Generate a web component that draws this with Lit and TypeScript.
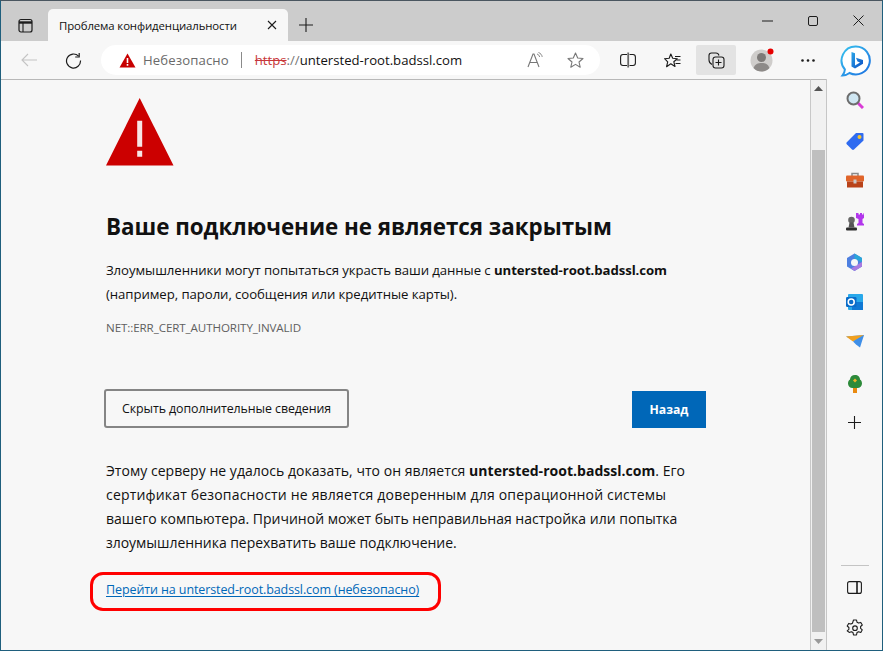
import { LitElement, html, css, svg } from "lit";
import { customElement } from "lit/decorators.js";

const ic = (w: number, h: number, body: unknown, vb?: string) => html`<svg width=${w} height=${h} viewBox=${vb ?? `0 0 ${w} ${h}`} fill="none">${body}</svg>`;
const S = "#1c1c1c";

@customElement("app-root")
export class AppRoot extends LitElement {
  static styles = css`
    :host { display: block; width: 883px; height: 651px; overflow: hidden; font-family: "Open Sans", "Noto Sans", sans-serif; color: #111; position: relative; box-sizing: border-box; border-left: 1px solid #1f5f7d; border-top: 1px solid #4a5660; border-right: 1px solid #1f5f7d; border-bottom: 1px solid #1f5f7d; background: #f7f7f7; }
    .win { display: grid; grid-template-rows: 40px 38px 1fr; height: 649px; }
    svg { display: block; flex: none; }
    .strip { background: #cccccc; display: flex; align-items: flex-end; padding-left: 47px; position: relative; }
    .tabbtn { position: absolute; left: 17px; top: 17px; }
    .tab { width: 240px; height: 32px; background: #f7f7f7; border-radius: 5px 5px 0 0; display: flex; align-items: center; padding: 0 11px; box-sizing: border-box; font-size: 11.4px; justify-content: space-between; letter-spacing: -0.12px; }
    .newtab { margin: 0 0 9px 11px; }
    .caption { margin-left: auto; display: flex; align-items: center; gap: 35px; padding: 0 18px 15px 0; align-self: flex-end; }
    .bar { background: #f7f7f7; display: flex; align-items: center; position: relative; box-sizing: border-box; }
    .nav { width: 100px; display: flex; padding-left: 19px; box-sizing: border-box; align-items: center; }
    .nav svg:last-child { margin-left: 27px; }
    .addr { width: 499px; height: 30px; background: #fff; border-radius: 15px; display: flex; align-items: center; padding-left: 18px; box-sizing: border-box; font-size: 13.15px; position: relative; }
    .unsafe { color: #6a6a6a; margin-left: 7px; letter-spacing: 0.12px; }
    .sep { width: 1px; height: 16px; background: #8a8a8a; margin: 0 13px 0 12px; }
    .https { color: #c8373a; text-decoration: line-through; }
    .slashes { color: #767676; }
    .addr .right { position: absolute; right: 16px; top: 7px; display: flex; gap: 24px; align-items: center; }
    .tools { display: flex; align-items: center; margin-left: 8px; }
    .tool { width: 40px; height: 30px; display: flex; align-items: center; justify-content: center; margin-right: 4px; }
    .tool.on { background: #e3e3e3; border-radius: 2px; }
    .tool.prof { width: 34px; margin-left: 5px; }
    .tool.more { width: 34px; margin-left: 8px; }
    .bing { position: absolute; left: 839px; top: 44px; }
    .main { display: flex; min-height: 0; }
    .content { width: 810px; box-sizing: border-box; padding: 18px 0 0 105px; border-top: 1px solid #b8b8b8; border-right: 1px solid #c8c8c8; background: #f7f7f7; }
    .h { font-size: 22.4px; font-weight: 700; margin: 46px 0 0; line-height: 30px; letter-spacing: -0.03px; color: #111; }
    .p { font-size: 13.2px; line-height: 24px; margin: 16px 0 0; width: 640px; letter-spacing: -0.07px; }
    .code { font-size: 11.6px; color: #5f5f5f; margin: 10px 0 0; line-height: 24px; letter-spacing: -0.09px; }
    .btns { display: flex; justify-content: space-between; width: 602px; margin-top: 49px; margin-left: -2px; align-items: flex-start; }
    .sec { width: 245px; height: 39px; box-sizing: border-box; border: 2px solid #858585; border-radius: 3px; background: #f7f7f7; font: inherit; font-size: 12.4px; color: #111; padding: 0; letter-spacing: -0.08px; }
    .pri { width: 74px; height: 37px; margin-top: 2px; border: 0; background: #0067b8; color: #fff; font: inherit; font-size: 12.2px; font-weight: 700; padding: 0; }
    .p2 { font-size: 14px; margin-top: 31px; width: 640px; letter-spacing: -0.04px; }
    .l1 { letter-spacing: 0.03px; }
    .l2 { letter-spacing: 0.18px; }
    .l3 { letter-spacing: 0px; }
    .link { display: block; font-size: 12.5px; color: #0067b8; text-decoration: underline; margin-top: 23px; line-height: 24px; letter-spacing: -0.1px; text-underline-offset: 2px; }
    .sb { width: 15px; background: #f1f1f1; position: relative; border-top: 1px solid #b8b8b8; box-sizing: border-box; }
    .thumb { position: absolute; left: 1px; width: 13px; top: 70px; height: 482px; background: #bfbfbf; }
    .ar { position: absolute; left: 3px; }
    .side { flex: 1; border-left: 1px solid #c6c6c6; background: #f7f7f7; position: relative; display: flex; flex-direction: column; align-items: center; padding-top: 12px; box-sizing: border-box; }
    .si { height: 40.6px; display: flex; align-items: flex-start; justify-content: center; }
    .bottom { position: absolute; bottom: 0; left: 0; right: 0; display: flex; flex-direction: column; align-items: center; }
    .rule { width: 28px; height: 1px; background: #c4c4c4; margin-bottom: 15px; }
    .gap-a { height: 25px; }
    .gap-b { height: 13px; }
    .ring { position: absolute; left: 89px; top: 571px; width: 351px; height: 39px; border: 3px solid #ff0000; border-radius: 13px; box-sizing: border-box; pointer-events: none; }
  `;

  render() {
    return html`<div class="win">
      <div class="strip">
        <div class="tabbtn">${ic(16, 16, svg`<rect x="1" y="1.5" width="13" height="12.5" rx="2" stroke=${S} stroke-width="1.2"/><path d="M1 4.5h13" stroke=${S} stroke-width="2.4"/><path d="M5 4.5V14" stroke=${S} stroke-width="1.1"/>`)}</div>
        <div class="tab"><span>Проблема конфиденциальности</span>${ic(10, 10, svg`<path d="M1 1l8 8M9 1l-8 8" stroke=${S} stroke-width="1.1"/>`)}</div>
        <div class="newtab">${ic(14, 14, svg`<path d="M7 0v14M0 7h14" stroke=${S} stroke-width="1.1"/>`)}</div>
        <div class="caption">
          ${ic(11, 2, svg`<path d="M0 1h11" stroke=${S} stroke-width="1"/>`)}
          ${ic(10, 10, svg`<rect x=".5" y=".5" width="9" height="9" rx="1.5" stroke=${S}/>`)}
          ${ic(11, 11, svg`<path d="M.5.5l10 10M10.5.5l-10 10" stroke=${S}/>`)}
        </div>
      </div>
      <div class="bar">
        <div class="nav">
          ${ic(18, 14, svg`<path d="M17 7H2M8 1L2 7l6 6" stroke="#c4c4c4" stroke-width="1.1"/>`)}
          ${ic(17, 17, svg`<path d="M13.6 4.2A7 7 0 1 0 15.5 8.5" stroke=${S} stroke-width="1.2"/><path d="M14.2 1v4h-4" stroke=${S} stroke-width="1.2"/>`)}
        </div>
        <div class="addr">
          ${ic(17, 15, svg`<path d="M8.5 0.5L16.5 14.5H.5z" fill="#c80000"/><path d="M8.5 5v5M8.5 11v1.8" stroke="#fff" stroke-width="1.6"/>`)}
          <span class="unsafe">Небезопасно</span><span class="sep"></span>
          <span class="https">https</span><span class="slashes">://</span><span>untersted-root.badssl.com</span>
          <div class="right">
            ${ic(16, 16, svg`<path d="M1 15L6 2h1l5 13M3 10.5h7.5" stroke="#777" stroke-width="1.1"/><path d="M10 2c1.6.6 2.4 1.6 2.6 3M11.5.5c2 .8 3.4 2.3 3.7 4.4" stroke="#777" stroke-width=".9"/>`)}
            ${ic(17, 16, svg`<path d="M8.5 1l2.2 5 5.3.5-4 3.5 1.2 5.2-4.7-2.8-4.7 2.8L5 10 1 6.5 6.3 6z" stroke="#777" stroke-width="1.1" stroke-linejoin="round"/>`)}
          </div>
        </div>
        <div class="tools">
          <div class="tool">${ic(16, 16, svg`<path d="M7 2.500H3A2.500 2.500 0 0 0 .6 5v6A2.500 2.500 0 0 0 3 13.500h4M9.500 2.500H13A2.500 2.500 0 0 1 15.400 5v6A2.500 2.500 0 0 1 13 13.500H9.500" stroke=${S} stroke-width="1.100"/><path d="M8.200 .5v15" stroke="#666" stroke-width="1.800"/>`)}</div>
          <div class="tool">${ic(17, 16, svg`<path d="M6.800 .8l1.900 4.300 4.600.4-3.500 3 1.200 4.800-4.200-2.700-4.200 2.900 1.100-4.900L.6 5.500l4.600-.4z" stroke=${S} stroke-width="1.150" stroke-linejoin="round" transform="translate(0 1.200)"/><path d="M11 4.500h5.500M12.500 8h4M11.500 11.500h5" stroke=${S} stroke-width="1.100"/>`)}</div>
          <div class="tool on">${ic(17, 17, svg`<path d="M4 12.500C2 11.500 1 10 1 8V3.500C1 2 2 1 3.500 1H8c1.500 0 2.500.5 3 2.500" stroke=${S} stroke-width="1.100"/><rect x="5" y="5" width="11" height="11" rx="2.500" stroke=${S} stroke-width="1.100"/><path d="M10.500 7.500v6M7.500 10.500h6" stroke=${S} stroke-width="1.100"/>`)}</div>
          <div class="tool prof">${ic(24, 24, svg`<circle cx="11.500" cy="12.500" r="11" fill="#cfcdcb"/><circle cx="11.500" cy="9.500" r="4.500" fill="#7d7a78"/><path d="M3.500 20c1.500-4 4.500-5 8-5s6.500 1 8 5c-2 2.500-5 3.500-8 3.500s-6-1-8-3.500z" fill="#8d8a88"/><circle cx="20.500" cy="3.500" r="3" fill="#e60000"/>`)}</div>
          <div class="tool more">${ic(14, 3, svg`<circle cx="1.500" cy="1.500" r="1.300" fill=${S}/><circle cx="7" cy="1.500" r="1.300" fill=${S}/><circle cx="12.500" cy="1.500" r="1.300" fill=${S}/>`)}</div>
        </div>
      </div>
      <div class="main">
        <div class="content">
          ${ic(68, 68, svg`<path d="M33.700 0L67.500 67.500H0z" fill="#cc0000"/><path d="M33.700 22.700v26M33.700 52.700v6" stroke="#f7e5e5" stroke-width="5"/>`)}
          <h1 class="h">Ваше подключение не является закрытым</h1>
          <p class="p">Злоумышленники могут попытаться украсть ваши данные с <b>untersted-root.badssl.com</b><br>(например, пароли, сообщения или кредитные карты).</p>
          <div class="code">NET::ERR_CERT_AUTHORITY_INVALID</div>
          <div class="btns"><button class="sec">Скрыть дополнительные сведения</button><button class="pri">Назад</button></div>
          <p class="p p2"><span class="l1">Этому серверу не удалось доказать, что он является <b>untersted-root.badssl.com</b>. Его</span><br><span class="l2">сертификат безопасности не является доверенным для операционной системы</span><br><span class="l3">вашего компьютера. Причиной может быть неправильная настройка или попытка</span><br>злоумышленника перехватить ваше подключение.</p>
          <a class="link">Перейти на untersted-root.badssl.com (небезопасно)</a>
        </div>
        <div class="sb">
          <div class="ar" style="top:6px">${ic(9, 5, svg`<path d="M4.500 0L9 5H0z" fill="#555"/>`)}</div>
          <div class="thumb"></div>
          <div class="ar" style="bottom:6px">${ic(9, 5, svg`<path d="M0 0h9L4.500 5z" fill="#999"/>`)}</div>
        </div>
        <div class="side">
          <div class="si">${ic(18, 18, svg`<path d="M11 11l6 6" stroke="#d93bd6" stroke-width="3"/><circle cx="7.500" cy="7.500" r="6" fill="#cfe6f2" stroke="#6d6d6d" stroke-width="2"/>`)}</div>
          <div class="si">${ic(18, 18, svg`<path d="M10 1h6.500a1 1 0 0 1 1 1v6.500L8 17.500a1.500 1.500 0 0 1-2 0L.8 12.300a1.500 1.500 0 0 1 0-2z" fill="#2f6bf0"/><circle cx="13.500" cy="5" r="2" fill="#f4c430"/>`)}</div>
          <div class="si">${ic(18, 16, svg`<path d="M6 4V1.500h6V4" stroke="#8a8a8a" stroke-width="1.500"/><rect y="3.500" width="18" height="6" rx="1" fill="#e0642a"/><rect x="1" y="9.500" width="16" height="6" fill="#b9431a"/><rect x="7.500" y="7.500" width="3" height="4" fill="#c9c9c9"/>`)}</div>
          <div class="si">${ic(18, 18, svg`<path d="M10.500 1h2v1.500h1.500V1h2v1.500h1.500V1h.500v5l-1.500 1v4l1.500 1v1.500h-7V12l1.500-1V7L10 6V1z" fill="#b236ec" transform="translate(0 -1)"/><circle cx="5.500" cy="7" r="3.300" fill="#666"/><path d="M3.500 9.500h4l1 5h-6z" fill="#555"/><rect y="14.500" width="11" height="3" rx="1" fill="#2d2d2d"/>`)}</div>
          <div class="si">${ic(17, 18, svg`<path d="M8.500 0.500L16 5v8.500L8.500 18 1 13.500V5z" fill="#4d7fe0"/><path d="M8.500 0.500L16 5v4l-7.500-3z" fill="#2aa5d8"/><path d="M16 9v4.500L8.500 18 5 15.500z" fill="#a97ae0"/><circle cx="8.500" cy="9.500" r="3.500" fill="#f7f7f7"/>`)}</div>
          <div class="si">${ic(17, 16, svg`<rect x="2" y="0" width="15" height="16" rx="1" fill="#28a8ea"/><path d="M6 8h11v8H6z" fill="#0f78d4"/><rect x="0" y="3" width="10.500" height="10" rx="1.200" fill="#0a6cc9"/><circle cx="5.200" cy="8" r="3" stroke="#fff" stroke-width="1.500"/>`)}</div>
          <div class="si">${ic(18, 13, svg`<path d="M0 1.500L18 0l-5 8z" fill="#4aa0f0"/><path d="M0 1.500l7 5 11-6.500z" fill="#f0a020"/><path d="M7 6.500L18 0l-4 12.500-4-3z" fill="#3f8fe8"/>`)}</div>
          <div class="si">${ic(14, 18, svg`<rect x="5" y="12" width="4" height="6" fill="#e98a10"/><path d="M7 0c3 0 5 2 5 4.500 1.500 1 2 2.500 2 4C14 11 12 13 9.500 13h-5C2 13 0 11 0 8.500c0-1.500.5-3 2-4C2 2 4 0 7 0z" fill="#2d8a3a"/><path d="M7 3.500l2 2-2 2-2-2z" fill="#f0b429"/>`)}</div>
          <div class="si">${ic(13, 13, svg`<path d="M6.500 0v13M0 6.500h13" stroke=${S} stroke-width="1.100"/>`)}</div>
          <div class="bottom">
            <div class="rule"></div>
            ${ic(15, 13, svg`<rect x=".6" y=".6" width="13.800" height="11.800" rx="2" stroke=${S} stroke-width="1.100"/><path d="M10 .6v11.800" stroke=${S} stroke-width="1.600"/>`)}
            <div class="gap-a"></div>
            ${ic(18, 18, svg`<path d="M7.500 1h3l.5 2.200 1.600.9 2.200-.7 1.500 2.600-1.700 1.500v1.800l1.700 1.500-1.500 2.600-2.200-.7-1.600.9-.5 2.400h-3l-.5-2.400-1.600-.9-2.200.7L1.200 11.800l1.700-1.500V8.500L1.200 7l1.500-2.600 2.200.7 1.600-.9z" stroke=${S} stroke-width="1.100" stroke-linejoin="round"/><circle cx="9" cy="9.200" r="2.300" stroke=${S} stroke-width="1.100"/>`)}
            <div class="gap-b"></div>
          </div>
        </div>
      </div>
    </div>
    <div class="bing">${ic(31, 32, svg`<defs><linearGradient id="bo" x1="0" y1="0" x2="1" y2="1"><stop offset="0" stop-color="#38c2ee"/><stop offset="1" stop-color="#1c6fe0"/></linearGradient><linearGradient id="bb" x1="0" y1="0" x2="1" y2="1"><stop offset="0" stop-color="#29a5e8"/><stop offset="1" stop-color="#0d4fc4"/></linearGradient></defs><path d="M16 1.500a14 14 0 1 1-6.500 26.500c-2 1.500-4 2.500-7 2.500 1.300-1.600 2.200-3.500 2.400-6A14 14 0 0 1 16 1.500z" fill="#fff" stroke="url(#bo)" stroke-width="2"/><path d="M11.500 7l3.500 1.200v12.300l5-2.900-2.500-1.200-1.500-3.700 7 2.400v3.600l-8 4.800-3.500-2z" fill="url(#bb)"/>`)}</div>
    <div class="ring"></div>`;
  }
}
